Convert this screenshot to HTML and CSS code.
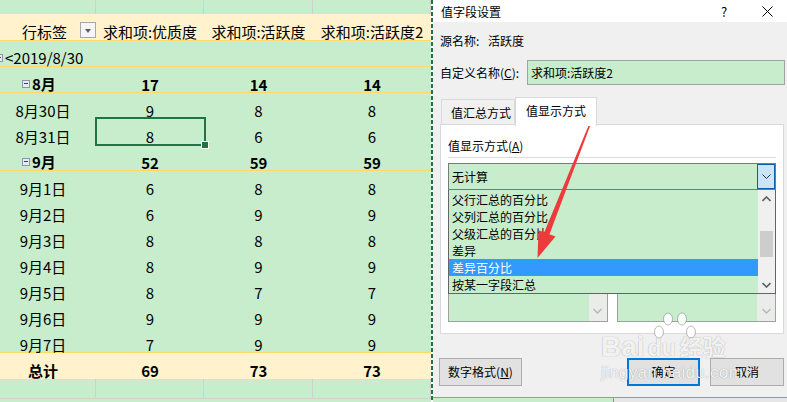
FILE: index.html
```html
<!DOCTYPE html>
<html lang="zh-CN">
<head>
    <meta charset="UTF-8">
    <title>值字段设置</title>
    <link rel="stylesheet" href="styles.css">
</head>
<body>
<div class="screen">
    <div class="sheet">
        <div class="row grid">
            <div class="cell col-a"></div><div class="cell col-b"></div><div class="cell col-c"></div><div class="cell col-d"></div>
        </div>
        <div class="row head">
            <div class="cell col-a head-label"><span>行标签</span><span class="filter"></span></div>
            <div class="cell col-b">求和项:优质度</div>
            <div class="cell col-c">求和项:活跃度</div>
            <div class="cell col-d">求和项:活跃度2</div>
        </div>
        <div class="row line">
            <div class="cell col-a year"><span class="tog"></span>&lt;2019/8/30</div>
            <div class="cell col-b"></div><div class="cell col-c"></div><div class="cell col-d"></div>
        </div>
        <div id="rows"></div>
        <div class="row total">
            <div class="cell col-a day">总计</div>
            <div class="cell col-b">69</div>
            <div class="cell col-c">73</div>
            <div class="cell col-d">73</div>
        </div>
        <div class="row grid bottom">
            <div class="cell col-a"></div><div class="cell col-b"></div><div class="cell col-c"></div><div class="cell col-d"></div>
        </div>
        <div class="cursor"></div>
    </div>

    <div class="marquee"></div>

    <div class="side">
        <div class="dialog">
            <div class="titlebar">
                <span class="title">值字段设置</span>
                <span class="help">?</span>
                <span class="close">
                    <svg width="11" height="11" viewBox="0 0 11 11"><path d="M0.5 0.5 L10.5 10.5 M10.5 0.5 L0.5 10.5" stroke="#000" stroke-width="1"/></svg>
                </span>
            </div>
            <div class="body">
                <div class="src"><span class="src-label">源名称:</span>活跃度</div>
                <div class="name">
                    <span class="name-label">自定义名称(<u>C</u>):</span>
                    <div class="input">求和项:活跃度2</div>
                </div>

                <div class="tabs">
                    <div class="tab">值汇总方式</div>
                    <div class="tab active">值显示方式</div>
                </div>
                <div class="panel">
                    <div class="panel-label">值显示方式(<u>A</u>)</div>
                    <div class="sep"></div>
                    <div class="combo">
                        <span class="combo-text">无计算</span>
                        <span class="combo-btn">
                            <svg width="9" height="6" viewBox="0 0 9 6"><path d="M0.5 0.5 L4.5 4.5 L8.5 0.5" fill="none" stroke="#333" stroke-width="1"/></svg>
                        </span>
                    </div>
                    <div class="list">
                        <div class="items">
                            <div class="item">父行汇总的百分比</div>
                            <div class="item">父列汇总的百分比</div>
                            <div class="item">父级汇总的百分比</div>
                            <div class="item">差异</div>
                            <div class="item selected">差异百分比</div>
                            <div class="item">按某一字段汇总</div>
                        </div>
                        <div class="scroll">
                            <svg class="up" width="9" height="6" viewBox="0 0 9 6"><path d="M0.5 5 L4.5 1 L8.5 5" fill="none" stroke="#606060" stroke-width="1.6"/></svg>
                            <div class="thumb"></div>
                            <svg class="down" width="9" height="6" viewBox="0 0 9 6"><path d="M0.5 1 L4.5 5 L8.5 1" fill="none" stroke="#606060" stroke-width="1.6"/></svg>
                        </div>
                    </div>
                    <div class="boxes">
                        <div class="box"><span class="box-scroll"><svg width="9" height="6" viewBox="0 0 9 6"><path d="M0.5 1 L4.5 5 L8.5 1" fill="none" stroke="#b5b5b5" stroke-width="1.4"/></svg></span></div>
                        <div class="box"><span class="box-scroll"><svg width="9" height="6" viewBox="0 0 9 6"><path d="M0.5 1 L4.5 5 L8.5 1" fill="none" stroke="#b5b5b5" stroke-width="1.4"/></svg></span></div>
                    </div>
                </div>

                <div class="buttons">
                    <div class="btn number">数字格式(<u>N</u>)</div>
                    <div class="btn ok">确定</div>
                    <div class="btn cancel">取消</div>
                </div>
            </div>
        </div>
        <div class="under"></div>
    </div>

    <!-- watermark -->
    <div class="watermark">
        <svg class="paw" width="44" height="30" viewBox="0 0 44 30">
            <ellipse cx="6" cy="20" rx="4.5" ry="6" />
            <ellipse cx="15" cy="7" rx="4.5" ry="6" />
            <ellipse cx="29" cy="7" rx="4.5" ry="6" />
            <ellipse cx="38" cy="20" rx="4.5" ry="6" />
        </svg>
        <div class="wm-logo"><span>Bai</span><span class="du">du</span><span class="cn">经验</span></div>
        <div class="wm-url">jingyan.baidu.com</div>
    </div>

    <svg class="arrow" width="787" height="402" viewBox="0 0 787 402">
        <polygon points="590.7,124.3 589.3,123.7 544.0,233.0 549.2,235.0" fill="#ee3a3a"/>
        <polygon points="537.5,258 555.5,236.6 538.5,230.2" fill="#ee3a3a"/>
    </svg>
</div>

<script>
    const pivotRows = [
        { label: "8月", vals: [17, 14, 14], month: true },
        { label: "8月30日", vals: [9, 8, 8] },
        { label: "8月31日", vals: [8, 6, 6] },
        { label: "9月", vals: [52, 59, 59], month: true },
        { label: "9月1日", vals: [6, 8, 8] },
        { label: "9月2日", vals: [6, 9, 9] },
        { label: "9月3日", vals: [8, 8, 8] },
        { label: "9月4日", vals: [8, 9, 9] },
        { label: "9月5日", vals: [8, 7, 7] },
        { label: "9月6日", vals: [9, 9, 9] },
        { label: "9月7日", vals: [7, 9, 9] }
    ];

    const rowsBox = document.getElementById('rows');

    pivotRows.forEach((r, i) => {
        const row = document.createElement('div');
        row.className = 'row';
        if (r.month) row.classList.add('month', 'line');
        if (i === pivotRows.length - 1) row.classList.add('line');

        const label = r.month
            ? `<div class="cell col-a month-label"><span class="tog"></span>${r.label}</div>`
            : `<div class="cell col-a day">${r.label}</div>`;

        row.innerHTML = label +
            `<div class="cell col-b">${r.vals[0]}</div>` +
            `<div class="cell col-c">${r.vals[1]}</div>` +
            `<div class="cell col-d">${r.vals[2]}</div>`;
        rowsBox.appendChild(row);
    });
</script>
</body>
</html>
```

FILE: styles.css
```css
* {
    box-sizing: border-box;
}
body {
    margin: 0;
    width: 787px;
    height: 402px;
    overflow: hidden;
    font-family: "Noto Sans CJK SC", "Liberation Sans", sans-serif;
    background: #c7edcc;
}
.screen {
    position: relative;
    display: flex;
    width: 787px;
    height: 402px;
}

/* spreadsheet */
.sheet {
    position: relative;
    width: 431px;
    flex-shrink: 0;
    background: #c7edcc;
    font-size: 15px;
    color: #000;
}
.row {
    display: flex;
    height: 26px;
}
.cell {
    padding-top: 8px;
    line-height: 20px;
    text-align: center;
    white-space: nowrap;
}
.col-a { width: 96px; }
.col-b { width: 108px; }
.col-c { width: 109px; }
.col-d { width: 118px; }

.row.grid {
    height: 14px;
}
.row.grid .cell {
    border-right: 1px solid #d0d0d0;
}
.row.grid.bottom {
    height: 20px;
    border-bottom: 1px solid #d0d0d0;
}
.row.head {
    height: 27px;
    background: #fff2cc;
    border-bottom: 1px solid #ffd966;
}
.row.head .cell {
    padding-top: 8px;
}
.row.line {
    border-bottom: 1px solid #ffd966;
}
.row.month,
.row.total {
    font-weight: bold;
}
.row.total {
    background: #fff2cc;
}

.head-label {
    display: flex;
    align-items: flex-start;
    padding-left: 22px;
    text-align: left;
}
.filter {
    position: relative;
    width: 16px;
    height: 16px;
    margin: 0 0 0 13px;
    border: 1px solid #a8a8a8;
    background: #f6f6f6;
}
.filter::after {
    content: "";
    position: absolute;
    left: 4px;
    top: 6px;
    border-left: 3.5px solid transparent;
    border-right: 3.5px solid transparent;
    border-top: 4px solid #606060;
}

.year,
.month-label {
    display: flex;
    align-items: center;
    text-align: left;
    height: 26px;
    padding-top: 8px;
}
.year {
    margin-left: -5px;
    width: 101px;
}
.month-label {
    padding-left: 22px;
}
.tog {
    position: relative;
    width: 8px;
    height: 8px;
    margin-right: 2px;
    border: 1px solid #8f95b0;
    background: #e8eaf2;
}
.tog::after {
    content: "";
    position: absolute;
    left: 1px;
    top: 2px;
    width: 4px;
    height: 1px;
    background: #3c3f52;
}
.day {
    padding-right: 10px;
}

.cursor {
    position: absolute;
    left: 95px;
    top: 117px;
    width: 111px;
    height: 29px;
    border: 2px solid #217346;
}
.cursor::after {
    content: "";
    position: absolute;
    right: -5px;
    bottom: -5px;
    width: 6px;
    height: 6px;
    background: #217346;
    border: 1px solid #fff;
}

.marquee {
    width: 2px;
    flex-shrink: 0;
    background: repeating-linear-gradient(to bottom, #217346 0 4px, #ffffff 4px 6px);
}

/* dialog */
.side {
    flex: 1;
    display: flex;
    flex-direction: column;
}
.dialog {
    height: 398px;
    background: #f0f0f0;
    border-bottom: 1px solid #8d9db0;
    font-size: 12px;
    color: #000;
}
.titlebar {
    display: flex;
    align-items: center;
    height: 22px;
    padding-left: 8px;
    background: #fff;
    font-size: 12px;
}
.title {
    flex: 1;
}
.help {
    width: 20px;
    margin-right: 23px;
    text-align: center;
    font-size: 13px;
}
.close {
    width: 20px;
    margin-right: 10px;
    display: flex;
    justify-content: center;
}

.body {
    padding-left: 7px;
}
.src {
    margin-top: 12px;
    line-height: 14px;
}
.src-label {
    display: inline-block;
    width: 48px;
}
.name {
    display: flex;
    align-items: center;
    margin-top: 12px;
}
.name-label {
    width: 87px;
}
.input {
    width: 258px;
    height: 25px;
    padding-left: 3px;
    line-height: 23px;
    border: 1px solid #a3a3a3;
    background: #c7edcc;
}

.tabs {
    display: flex;
    align-items: flex-end;
    height: 27px;
    margin-top: 12px;
}
.tab {
    width: 74px;
    height: 25px;
    margin-left: 1px;
    padding-left: 9px;
    line-height: 25px;
    border: 1px solid #d9d9d9;
    border-bottom: none;
    background: #f0f0f0;
}
.tab.active {
    position: relative;
    width: 82px;
    height: 29px;
    margin: 0 0 -2px 0;
    padding-left: 10px;
    line-height: 26px;
    background: #fff;
    z-index: 1;
}

.panel {
    width: 344px;
    height: 210px;
    padding-left: 7px;
    border: 1px solid #d9d9d9;
    background: #fff;
}
.panel-label {
    margin-top: 14px;
    line-height: 14px;
}
.sep {
    width: 328px;
    height: 1px;
    margin-top: 4px;
    background: #dcdcdc;
}
.combo {
    display: flex;
    align-items: center;
    width: 328px;
    height: 27px;
    margin-top: 5px;
    padding-left: 3px;
    border: 1px solid #7a7a7a;
    background: #c7edcc;
}
.combo-text {
    flex: 1;
}
.combo-btn {
    display: flex;
    align-items: center;
    justify-content: center;
    width: 18px;
    height: 25px;
    border: 1px solid #0a5fa8;
    background: #cce4f7;
}

.list {
    display: flex;
    width: 328px;
    height: 104px;
    border: 1px solid #646464;
    border-top: none;
    background: #c7edcc;
}
.items {
    flex: 1;
    padding-top: 1px;
}
.item {
    height: 17px;
    padding-left: 3px;
    line-height: 17px;
}
.item.selected {
    background: #3399ff;
    color: #fff;
    outline: 1px dotted #e2731e;
    outline-offset: -1px;
}
.scroll {
    position: relative;
    width: 17px;
    background: #f0f0f0;
}
.scroll .up {
    position: absolute;
    left: 4px;
    top: 6px;
}
.scroll .down {
    position: absolute;
    left: 4px;
    bottom: 5px;
}
.thumb {
    position: absolute;
    left: 2px;
    top: 41px;
    width: 13px;
    height: 26px;
    background: #cdcdcd;
}

.boxes {
    display: flex;
    gap: 9px;
    width: 328px;
}
.box {
    display: flex;
    justify-content: flex-end;
    width: 160px;
    height: 28px;
    border: 1px solid #a0a0a0;
    border-top: none;
    background: #c7edcc;
}
.box-scroll {
    display: flex;
    align-items: flex-end;
    justify-content: center;
    width: 18px;
    padding-bottom: 7px;
    background: #e9ece9;
}

.buttons {
    display: flex;
    width: 345px;
    margin: 24px 0 0 -1px;
}
.btn {
    height: 28px;
    line-height: 26px;
    text-align: center;
    border: 1px solid #adadad;
    background: #e1e1e1;
}
.btn.number {
    width: 83px;
}
.btn.ok {
    width: 73px;
    margin-left: auto;
    border: 2px solid #0078d7;
    line-height: 24px;
}
.btn.cancel {
    width: 74px;
    margin-left: 10px;
}

.under {
    flex: 1;
    background: linear-gradient(to right, #c7edcc 0 180px, #8e8e8e 180px 181px, #e6e6e6 181px);
}

/* overlays */
.watermark {
    position: absolute;
    left: 601px;
    top: 312px;
    pointer-events: none;
    color: rgba(255, 255, 255, 0.9);
    text-shadow: 0 0 1px rgba(80, 80, 80, 0.6);
    font-family: "Liberation Sans", "Noto Sans CJK SC", sans-serif;
    font-weight: bold;
}
.paw {
    position: absolute;
    left: 52px;
    top: 0;
    fill: rgba(255, 255, 255, 0.9);
    stroke: rgba(120, 120, 120, 0.5);
    stroke-width: 1;
}
.wm-logo {
    display: flex;
    align-items: baseline;
    margin-top: 20px;
    font-size: 28px;
    line-height: 28px;
}
.wm-logo .du {
    margin-left: 3px;
    font-size: 23px;
}
.wm-logo .cn {
    margin-left: 4px;
    font-family: "Noto Sans CJK SC", sans-serif;
    font-size: 23px;
}
.wm-url {
    margin-top: 1px;
    font-size: 17px;
    font-weight: normal;
    letter-spacing: 0.3px;
}
.arrow {
    position: absolute;
    left: 0;
    top: 0;
    pointer-events: none;
}
```
